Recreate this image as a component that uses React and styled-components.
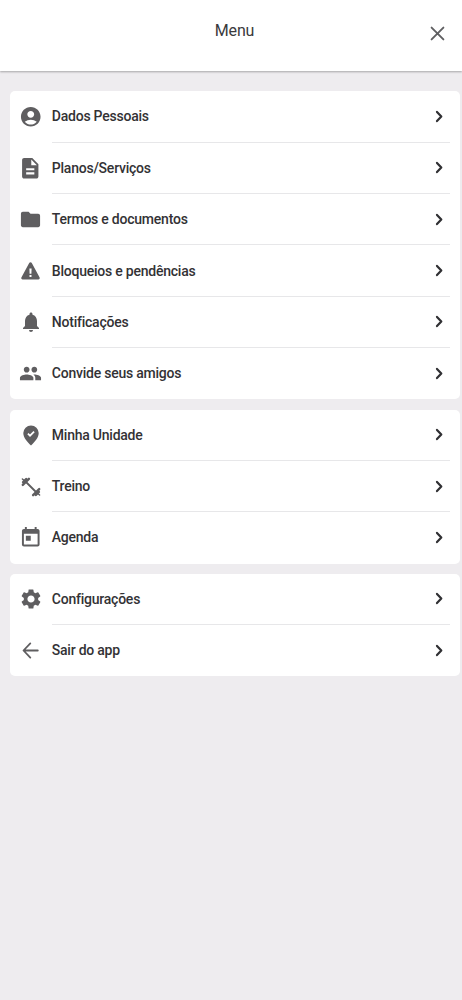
import React from "react";
import styled, { createGlobalStyle } from "styled-components";
import {
  MdAccountCircle,
  MdDescription,
  MdFolder,
  MdNotifications,
  MdPeople,
  MdToday,
  MdSettings,
} from "react-icons/md";

const GlobalStyle = createGlobalStyle`
  * { box-sizing: border-box; }
  body {
    margin: 0;
    background: #eeecef;
    font-family: Roboto, "Liberation Sans", sans-serif;
  }
`;

const Screen = styled.div`
  min-height: 1000px;
  background: #eeecef;
`;

const Header = styled.header`
  display: grid;
  grid-template-columns: 48px 1fr 48px;
  height: 71px;
  background: #fff;
  box-shadow: 0 1px 2px rgba(0, 0, 0, 0.3);
`;

const Title = styled.h1`
  grid-column: 2;
  margin: 0;
  padding: 21px 0 0 7px;
  text-align: center;
  font-size: 16px;
  font-weight: 400;
  line-height: 20px;
  letter-spacing: -0.15px;
  color: #3a3a3c;
`;

const CloseButton = styled.button`
  display: flex;
  align-items: flex-start;
  justify-content: center;
  padding: 26px 0.5px 0 0;
  border: 0;
  background: none;
  color: #5f5f61;
`;

const Sections = styled.main`
  display: flex;
  flex-direction: column;
  gap: 10.1px;
  padding: 20.3px 2.5px 0 9.6px;
`;

const Card = styled.ul`
  margin: 0;
  padding: 0;
  list-style: none;
  background: #fff;
  border-radius: 5px;
`;

const Row = styled.li`
  display: flex;
  height: 51.37px;
  padding-right: 10px;
`;

const IconSlot = styled.span`
  display: flex;
  align-items: center;
  justify-content: center;
  width: 42.2px;
  color: #5f5e60;
  svg { flex: none; }
`;

const RowBody = styled.div`
  flex: 1;
  display: flex;
  align-items: center;
  justify-content: space-between;
  padding-right: 7px;
  border-bottom: 1px solid ${(p) => (p.$last ? "transparent" : "#e7e7e9")};
`;

const Label = styled.span`
  font-size: 14px;
  font-weight: 500;
  line-height: 20px;
  letter-spacing: -0.23px;
  color: #333235;
`;

const CloseIcon = () => (
  <svg width="15" height="15" viewBox="0 0 15 15" fill="none" stroke="currentColor" strokeWidth="1.9" strokeLinecap="round">
    <path d="M1.6 1.6 13.4 13.4M13.4 1.6 1.6 13.4" />
  </svg>
);

const Chevron = () => (
  <svg width="8" height="13" viewBox="0 0 8 13" fill="none" stroke="#303033" strokeWidth="2.2" strokeLinecap="round" strokeLinejoin="round">
    <path d="M2 1.9 6.3 6.5 2 11.1" />
  </svg>
);

const WarningIcon = () => (
  <svg width="19" height="18" viewBox="0 0 19 18" fill="currentColor">
    <path fillRule="evenodd" d="M8.2 1.1a1.5 1.5 0 0 1 2.6 0l7.7 14.2a1.4 1.4 0 0 1-1.2 2.2H1.7a1.4 1.4 0 0 1-1.2-2.2ZM8.4 6.6l.2 5.1h1.8l.2-5.1Zm.1 6.4v2h2v-2Z" />
  </svg>
);

const PinCheckIcon = () => (
  <svg width="16" height="21" viewBox="0 0 16 21">
    <path fill="currentColor" d="M8 .4A7.7 7.7 0 0 0 .3 8.1C.3 13 4.5 17.1 8 20.6c3.5-3.5 7.7-7.6 7.7-12.5A7.7 7.7 0 0 0 8 .4Z" />
    <path fill="none" stroke="#fff" strokeWidth="1.7" d="m4.9 8.7 2.1 2 4.1-4.1" />
  </svg>
);

const DumbbellIcon = () => (
  <svg width="20" height="20" viewBox="0 0 20 20" fill="none" stroke="currentColor" strokeLinecap="round">
    <path strokeWidth="1.8" d="m5 5 10 10" />
    <path strokeWidth="2.4" d="M1.8 7.9 7.9 1.8M12.1 18.2l6.1-6.1" />
    <path strokeWidth="2.6" d="M2.2 5.2 5.2 2.2M14.8 17.8l3-3" />
    <path strokeWidth="1.5" d="m1.4 2 2.1 1.8M16.5 16.2l2.1 1.8" />
  </svg>
);

const BackIcon = () => (
  <svg width="17" height="17" viewBox="0 0 17 17" fill="none" stroke="currentColor" strokeWidth="1.8" strokeLinecap="round" strokeLinejoin="round">
    <path d="M8.3 1.4 1.5 8.5l6.8 7.1M2 8.5h13.8" />
  </svg>
);

const sections = [
  [
    { label: "Dados Pessoais", icon: <MdAccountCircle size={23.5} /> },
    { label: "Planos/Serviços", icon: <MdDescription size={24.5} /> },
    { label: "Termos e documentos", icon: <MdFolder size={23} /> },
    { label: "Bloqueios e pendências", icon: <WarningIcon /> },
    { label: "Notificações", icon: <MdNotifications size={24} /> },
    { label: "Convide seus amigos", icon: <MdPeople size={23} /> },
  ],
  [
    { label: "Minha Unidade", icon: <PinCheckIcon /> },
    { label: "Treino", icon: <DumbbellIcon /> },
    { label: "Agenda", icon: <MdToday size={23.5} /> },
  ],
  [
    { label: "Configurações", icon: <MdSettings size={24} /> },
    { label: "Sair do app", icon: <BackIcon /> },
  ],
];

export default function App() {
  return (
    <Screen>
      <GlobalStyle />
      <Header>
        <Title>Menu</Title>
        <CloseButton aria-label="Fechar">
          <CloseIcon />
        </CloseButton>
      </Header>
      <Sections>
        {sections.map((items) => (
          <Card key={items[0].label}>
            {items.map(({ label, icon }, i) => (
              <Row key={label}>
                <IconSlot>{icon}</IconSlot>
                <RowBody $last={i === items.length - 1}>
                  <Label>{label}</Label>
                  <Chevron />
                </RowBody>
              </Row>
            ))}
          </Card>
        ))}
      </Sections>
    </Screen>
  );
}
